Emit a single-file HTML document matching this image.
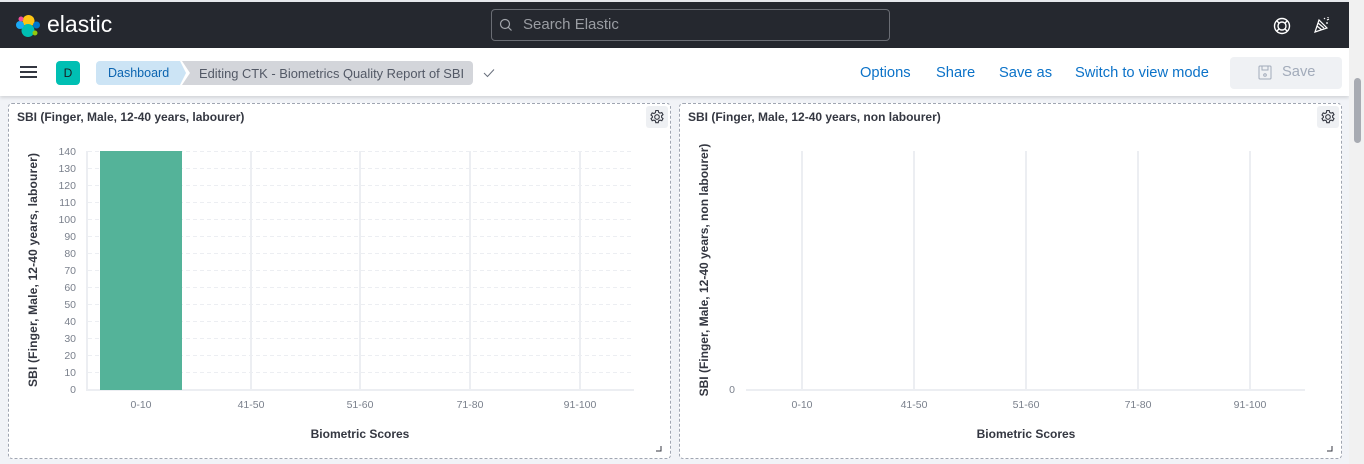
<!DOCTYPE html>
<html><head><meta charset="utf-8"><style>
*{box-sizing:border-box;margin:0;padding:0}
body{width:1364px;height:464px;overflow:hidden;background:#f1f3f7;font-family:"Liberation Sans",sans-serif;position:relative}
.top{position:absolute;left:0;top:0;width:1349px;height:2px;background:#e6e8ec}
.hdr{position:absolute;left:0;top:2px;width:1349px;height:46px;background:#25282f}
.sub{position:absolute;left:0;top:48px;width:1349px;height:48px;background:#fff;box-shadow:0 2px 3px rgba(0,0,0,.12)}
.sb{position:absolute;left:1349px;top:0;width:15px;height:464px;background:#f1f1f1}
.sbt{position:absolute;left:1354px;top:78px;width:7px;height:65px;background:#a8abb2;border-radius:4px}
.t{position:absolute;white-space:nowrap}
.panel{position:absolute;top:103px;height:356px;background:#fff;border:1px dashed #a0a6b2;border-radius:4px}
.ptitle{position:absolute;left:8px;top:6px;font-size:12px;font-weight:bold;color:#343741}
.gear{position:absolute;right:2px;top:2px;width:22px;height:22px;background:#eef0f3;border-radius:3px}
.nav a{color:#0b72c8;font-size:14.7px}
</style></head><body>
<div class="top"></div>
<div class="hdr">
<svg style="position:absolute;left:15px;top:11px" width="26" height="26" viewBox="0 0 26 26">
<circle cx="13.5" cy="8" r="6" fill="#fec514"/>
<circle cx="13" cy="17.5" r="6.5" fill="#00bfb3"/>
<circle cx="5" cy="12" r="4" fill="#1ba9f5"/>
<circle cx="21.5" cy="12" r="3.5" fill="#0077cc"/>
<circle cx="6" cy="6" r="2.5" fill="#f04e98"/>
<circle cx="20" cy="20" r="2.5" fill="#93c90e"/>
</svg>
<div class="t" style="left:47px;top:9px;font-size:23px;color:#fff">elastic</div>
<div style="position:absolute;left:491px;top:7px;width:399px;height:32px;border:1px solid #6a6d74;border-radius:4px"></div>
<svg style="position:absolute;left:499px;top:16px" width="14" height="14" viewBox="0 0 14 14"><circle cx="6" cy="6" r="4.5" fill="none" stroke="#a2a5ab" stroke-width="1.2"/><path d="M9.3 9.3L12.5 12.5" stroke="#a2a5ab" stroke-width="1.2"/></svg>
<div class="t" style="left:523px;top:14px;font-size:15px;color:#9a9da3">Search Elastic</div>
<svg style="position:absolute;left:1273px;top:15px" width="18" height="18" viewBox="0 0 18 18" fill="none" stroke="#fff" stroke-width="1.4"><circle cx="9" cy="9" r="7.5"/><circle cx="9" cy="9" r="4"/><path d="M3.7 3.7L6.2 6.2M14.3 3.7L11.8 6.2M3.7 14.3L6.2 11.8M14.3 14.3L11.8 11.8"/></svg>
<svg style="position:absolute;left:1313px;top:14px" width="18" height="18" viewBox="0 0 18 18" fill="none" stroke="#fff" stroke-width="1.2"><path d="M2 16L6 4L14 12Z M4 10L9 14M5 7L11 12"/><path d="M11 2l1 1M14 4l2-1M13 7h2M15 1v1"/></svg>
</div>
<div class="sub">
<div style="position:absolute;left:20px;top:18px;width:17px;height:2px;background:#343741;box-shadow:0 5px 0 #343741,0 10px 0 #343741"></div>
<div style="position:absolute;left:56px;top:13px;width:24px;height:24px;background:#00bfb3;border-radius:4px;color:#1a1c21;font-size:12px;text-align:center;line-height:24px">D</div>
<div style="position:absolute;left:96px;top:13px;width:90px;height:24px;background:#cce4f5;border-radius:4px 0 0 4px;clip-path:polygon(0 0,84px 0,100% 50%,84px 100%,0 100%)"></div>
<div class="t" style="left:108px;top:18px;font-size:12.5px;color:#0b64b0">Dashboard</div>
<div style="position:absolute;left:182px;top:13px;width:291px;height:24px;background:#d3d5da;border-radius:0 4px 4px 0;clip-path:polygon(0 0,100% 0,100% 100%,0 100%,8px 50%)"></div>
<div class="t" style="left:199px;top:18px;font-size:12.9px;color:#535966">Editing CTK - Biometrics Quality Report of SBI</div>
<svg style="position:absolute;left:483px;top:20px" width="12" height="10" viewBox="0 0 12 10"><path d="M1 5l3.5 3.5L11 1.5" fill="none" stroke="#69707d" stroke-width="1"/></svg>
<div class="nav">
<a class="t" style="left:860px;top:17px">Options</a>
<a class="t" style="left:936px;top:17px">Share</a>
<a class="t" style="left:999px;top:17px">Save as</a>
<a class="t" style="left:1075px;top:17px">Switch to view mode</a>
</div>
<div style="position:absolute;left:1230px;top:9px;width:112px;height:32px;background:#eff1f4;border-radius:4px"></div>
<svg style="position:absolute;left:1258px;top:17px" width="14" height="15" viewBox="0 0 14 15" fill="none" stroke="#a2abba" stroke-width="1"><rect x="1" y="1" width="12" height="13" rx="1"/><path d="M4 1v4h6V1"/><circle cx="7" cy="10" r="1.3"/></svg>
<div class="t" style="left:1282px;top:16px;font-size:14.7px;color:#a2abba">Save</div>
</div>
<div class="sb"></div><div class="sbt"></div>

<div class="panel" style="left:8px;width:663px">
<div class="ptitle">SBI (Finger, Male, 12-40 years, labourer)</div>
<div class="gear"><svg style="margin:3px" width="16" height="16" viewBox="0 0 16 16" fill="none" stroke="#343741" stroke-width="1.1"><circle cx="8" cy="8" r="2.3"/><path d="M6.8 1.5h2.4l.4 1.8 1.4.8 1.8-.6 1.2 2.1-1.4 1.2v1.6l1.4 1.2-1.2 2.1-1.8-.6-1.4.8-.4 1.8H6.8l-.4-1.8-1.4-.8-1.8.6-1.2-2.1 1.4-1.2V7.2L2 6l1.2-2.1 1.8.6 1.4-.8z"/></svg></div>
</div>
<div class="panel" style="left:679px;width:663px">
<div class="ptitle">SBI (Finger, Male, 12-40 years, non labourer)</div>
<div class="gear"><svg style="margin:3px" width="16" height="16" viewBox="0 0 16 16" fill="none" stroke="#343741" stroke-width="1.1"><circle cx="8" cy="8" r="2.3"/><path d="M6.8 1.5h2.4l.4 1.8 1.4.8 1.8-.6 1.2 2.1-1.4 1.2v1.6l1.4 1.2-1.2 2.1-1.8-.6-1.4.8-.4 1.8H6.8l-.4-1.8-1.4-.8-1.8.6-1.2-2.1 1.4-1.2V7.2L2 6l1.2-2.1 1.8.6 1.4-.8z"/></svg></div>
</div>

<svg style="position:absolute;left:0;top:0" width="1349" height="464" font-family="Liberation Sans, sans-serif">
<g stroke="#eceef2" stroke-width="1" stroke-dasharray="4,3">
<line x1="88" y1="151.5" x2="634" y2="151.5"/><line x1="88" y1="168.5" x2="634" y2="168.5"/><line x1="88" y1="185.5" x2="634" y2="185.5"/><line x1="88" y1="202.5" x2="634" y2="202.5"/><line x1="88" y1="219.5" x2="634" y2="219.5"/><line x1="88" y1="236.5" x2="634" y2="236.5"/><line x1="88" y1="253.5" x2="634" y2="253.5"/><line x1="88" y1="270.5" x2="634" y2="270.5"/><line x1="88" y1="287.5" x2="634" y2="287.5"/><line x1="88" y1="304.5" x2="634" y2="304.5"/><line x1="88" y1="321.5" x2="634" y2="321.5"/><line x1="88" y1="338.5" x2="634" y2="338.5"/><line x1="88" y1="355.5" x2="634" y2="355.5"/><line x1="88" y1="372.5" x2="634" y2="372.5"/>
</g>
<g stroke="#eceef2" stroke-width="2">
<line x1="87" y1="151" x2="87" y2="390"/><line x1="251" y1="151" x2="251" y2="390"/><line x1="360" y1="151" x2="360" y2="390"/><line x1="470" y1="151" x2="470" y2="390"/><line x1="580" y1="151" x2="580" y2="390"/>
<line x1="86" y1="390" x2="634" y2="390"/>
<line x1="802" y1="151" x2="802" y2="390"/><line x1="914" y1="151" x2="914" y2="390"/><line x1="1026" y1="151" x2="1026" y2="390"/><line x1="1138" y1="151" x2="1138" y2="390"/><line x1="1250" y1="151" x2="1250" y2="390"/>
<line x1="746" y1="390" x2="1305" y2="390"/>
</g>
<rect x="100" y="151" width="82" height="239" fill="#54b399"/>
<g font-size="10.5" fill="#7a808c" text-anchor="end">
<text x="76" y="155">140</text><text x="76" y="172">130</text><text x="76" y="189">120</text><text x="76" y="206">110</text><text x="76" y="223">100</text><text x="76" y="240">90</text><text x="76" y="257">80</text><text x="76" y="274">70</text><text x="76" y="291">60</text><text x="76" y="308">50</text><text x="76" y="325">40</text><text x="76" y="342">30</text><text x="76" y="359">20</text><text x="76" y="376">10</text><text x="76" y="393">0</text>
<text x="735" y="393">0</text>
</g>
<g font-size="10.5" fill="#7a808c" text-anchor="middle">
<text x="141" y="408">0-10</text><text x="251" y="408">41-50</text><text x="360" y="408">51-60</text><text x="470" y="408">71-80</text><text x="580" y="408">91-100</text>
<text x="802" y="408">0-10</text><text x="914" y="408">41-50</text><text x="1026" y="408">51-60</text><text x="1138" y="408">71-80</text><text x="1250" y="408">91-100</text>
</g>
<g font-size="12" font-weight="bold" fill="#343741" text-anchor="middle">
<text x="360" y="438">Biometric Scores</text>
<text x="1026" y="438">Biometric Scores</text>
<text transform="translate(37,270) rotate(-90)" textLength="234">SBI (Finger, Male, 12-40 years, labourer)</text>
<text transform="translate(708,270) rotate(-90)">SBI (Finger, Male, 12-40 years, non labourer)</text>
</g>
<path d="M661 446v5h-5M1332 446v5h-5" stroke="#343741" stroke-width="1" fill="none"/>
</svg>
</body></html>
